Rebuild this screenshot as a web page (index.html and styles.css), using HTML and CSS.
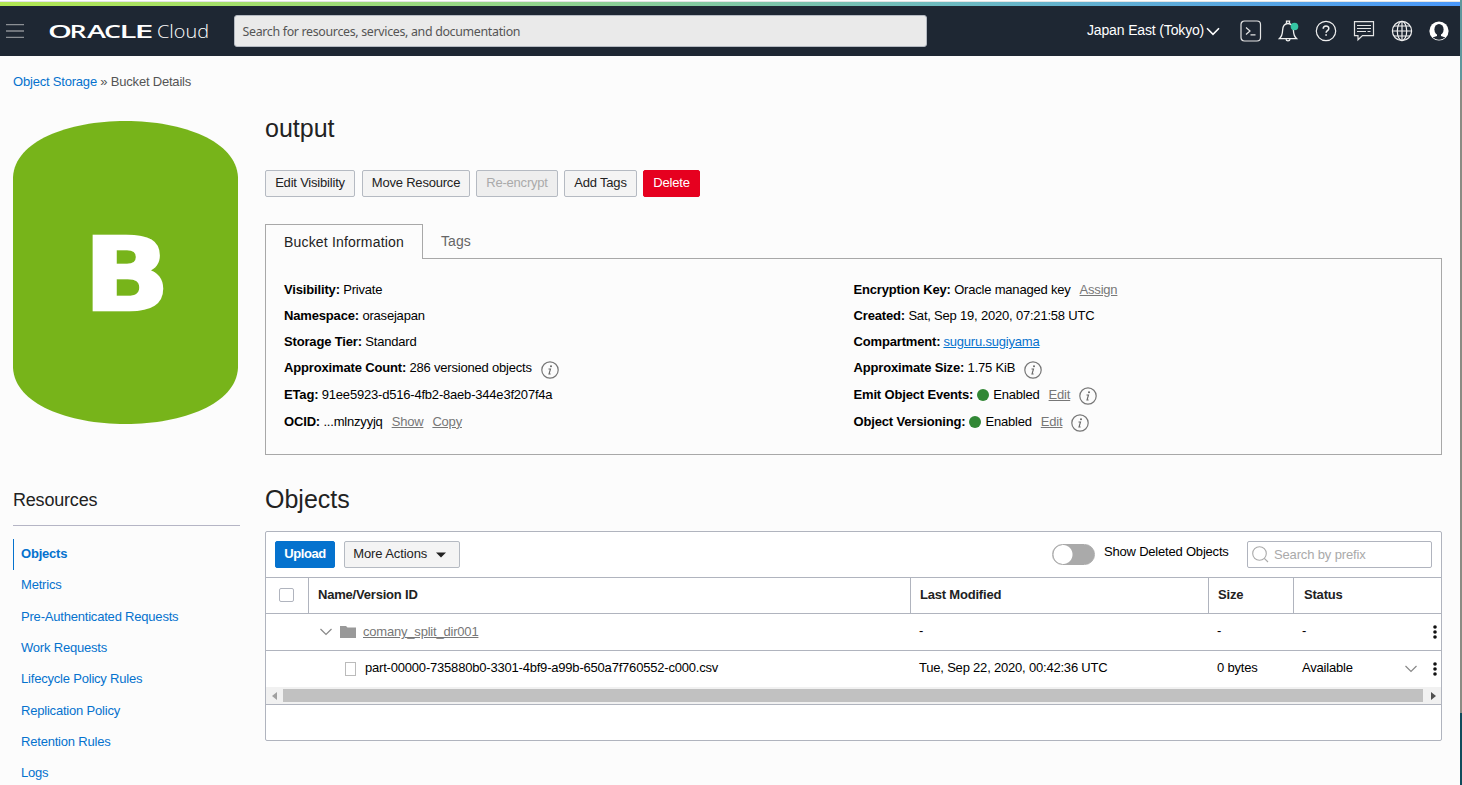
FILE: index.html
```html
<!DOCTYPE html>
<html lang="en">
<head>
<meta charset="utf-8">
<title>Bucket Details</title>
<link rel="stylesheet" href="styles.css">
</head>
<body>
<svg class="defs" width="0" height="0">
  <symbol id="info" viewBox="0 0 18 18"><circle cx="9" cy="9" r="8.2" fill="none" stroke="#777" stroke-width="1.2"/><circle cx="10" cy="5.2" r="1" fill="#666"/><path d="M7.5 8h2l-1.500 5h1.600" fill="none" stroke="#666" stroke-width="1.100"/></symbol>
  <symbol id="dots" viewBox="0 0 4 14"><g fill="#111"><circle cx="2" cy="2" r="1.8"/><circle cx="2" cy="7" r="1.8"/><circle cx="2" cy="12" r="1.8"/></g></symbol>
  <symbol id="chev" viewBox="0 0 12 8"><path d="M.5 1 6 6.5 11.5 1" fill="none" stroke="currentColor" stroke-width="1.200"/></symbol>
</svg>
<div class="screen">
<div class="page">
  <div class="strip"></div>
  <header class="top">
    <svg class="burger" width="18" height="14"><path d="M0 .5h18M0 7h18M0 13.500h18" stroke="#8b8f94" stroke-width="1.300"/></svg>
    <svg class="logo" width="170" height="24"><g class="oracle"><text x="-1" y="19" textLength="24" lengthAdjust="spacingAndGlyphs">O</text><text x="20.500" y="19" textLength="17" lengthAdjust="spacingAndGlyphs">R</text><text x="38" y="19" textLength="19" lengthAdjust="spacingAndGlyphs">A</text><text x="55" y="19" textLength="17" lengthAdjust="spacingAndGlyphs">C</text><text x="70.500" y="19" textLength="17" lengthAdjust="spacingAndGlyphs">L</text><text x="85.500" y="19" textLength="19" lengthAdjust="spacingAndGlyphs">E</text></g><text class="cloud" x="108" y="19" textLength="52" lengthAdjust="spacingAndGlyphs">Cloud</text></svg>
    <div class="search">Search for resources, services, and documentation</div>
    <div class="region"><span>Japan East (Tokyo)</span><svg width="14" height="9"><path d="M1 1.2 7 7.4l6-6.2" fill="none" stroke="#fff" stroke-width="1.6"/></svg></div>
    <nav class="icons">
      <svg width="22" height="22" fill="none" stroke="#e4e4e4" stroke-width="1.2"><rect x="1" y="1" width="19.5" height="20" rx="3.5"/><path d="m6 7.5 4 3.5-4 3.5M10.5 14.8h5"/></svg>
      <svg width="22" height="22" fill="none" stroke="#f0f0f0" stroke-width="1.3"><path d="M1.5 18.6c2.2-2 2.9-4.1 3.1-8.2C4.8 6.2 7 3.5 10 3.5s5.200 2.700 5.400 6.900c.2 4.100.9 6.200 3.100 8.200zM8.500 3V1.200h3V3M8 19.300c.4 2 3.600 2 4 0"/><circle cx="16.500" cy="6.500" r="3.800" fill="#36c5a4" stroke="none"/></svg>
      <svg width="22" height="22" fill="none" stroke="#f0f0f0" stroke-width="1.200"><circle cx="11" cy="11" r="9.700"/><path d="M8.200 8.800c0-3.800 5.700-3.600 5.600-.3 0 2.100-2.700 2.200-2.700 4.300" stroke-width="1.500"/><path d="M10.300 15h1.600" stroke-width="1.700"/></svg>
      <svg width="22" height="22" fill="none" stroke="#e4e4e4" stroke-width="1.200"><path d="M1.500 1.600h19v14H9.500L5 19.800v-4.200H1.500z"/><path d="M4 5.500h14M4 8.500h14M4 11.500h9M14.500 11.500h3"/></svg>
      <svg width="22" height="22" fill="none" stroke="#f0f0f0" stroke-width="1.200"><circle cx="11" cy="11" r="9.600"/><ellipse cx="11" cy="11" rx="4.700" ry="9.600"/><path d="M11 1.400v19.200M1.400 11h19.200M3 6h16M3 16h16"/></svg>
      <svg width="22" height="22"><clipPath id="av"><circle cx="11" cy="11" r="8.700"/></clipPath><circle cx="11" cy="11" r="9.600" fill="#fff"/><g fill="#1e2733"><ellipse cx="11" cy="9.500" rx="4.600" ry="5.500"/><path clip-path="url(#av)" d="M9 13h4v3l4.500 1.600c-3 3.400-10 3.400-13 0L9 16z"/></g></svg>
    </nav>
  </header>
  <div class="crumbs"><a>Object Storage</a> » Bucket Details</div>
  <div class="body">
    <aside>
      <svg class="bucket" width="225" height="303"><path d="M0 56C2 20 55 0 112.500 0S223 20 225 56V247c-2 36-55 56-112.500 56S2 283 0 247z" fill="#77b41a"/><text class="b" x="70.700" y="189" textLength="86" lengthAdjust="spacingAndGlyphs">B</text></svg>
      <h2>Resources</h2>
      <ul>
        <li class="on">Objects</li><li>Metrics</li><li>Pre-Authenticated Requests</li><li>Work Requests</li><li>Lifecycle Policy Rules</li><li>Replication Policy</li><li>Retention Rules</li><li>Logs</li>
      </ul>
    </aside>
    <main>
      <h1>output</h1>
      <div class="actions"><span class="btn w90">Edit Visibility</span><span class="btn w108">Move Resource</span><span class="btn off">Re-encrypt</span><span class="btn w73">Add Tags</span><span class="btn del">Delete</span></div>
      <div class="tabs"><span class="tab cur">Bucket Information</span><span class="tab">Tags</span></div>
      <section class="info">
        <dl>
          <div><b>Visibility:</b> Private</div>
          <div><b>Namespace:</b> orasejapan</div>
          <div><b>Storage Tier:</b> Standard</div>
          <div><b>Approximate Count:</b> 286 versioned objects<svg class="i"><use href="#info"/></svg></div>
          <div><b>ETag:</b> 91ee5923-d516-4fb2-8aeb-344e3f207f4a</div>
          <div><b>OCID:</b> ...mlnzyyjq<u>Show</u><u>Copy</u></div>
        </dl>
        <dl>
          <div><b>Encryption Key:</b> Oracle managed key<u>Assign</u></div>
          <div><b>Created:</b> Sat, Sep 19, 2020, 07:21:58 UTC</div>
          <div><b>Compartment:</b><a class="ul">suguru.sugiyama</a></div>
          <div><b>Approximate Size:</b> 1.75 KiB<svg class="i"><use href="#info"/></svg></div>
          <div><b>Emit Object Events:</b><i class="dot"></i>Enabled<u>Edit</u><svg class="i"><use href="#info"/></svg></div>
          <div><b>Object Versioning:</b><i class="dot"></i>Enabled<u>Edit</u><svg class="i"><use href="#info"/></svg></div>
        </dl>
      </section>
      <h1 class="obj">Objects</h1>
      <section class="panel">
        <div class="bar">
          <span class="btn up">Upload</span>
          <span class="btn more">More Actions <svg width="10" height="6"><path d="M0 .5h10L5 5.500z" fill="#222"/></svg></span>
          <span class="toggle"></span><span class="lbl">Show Deleted Objects</span>
          <span class="find"><svg width="17" height="17" fill="none" stroke="#aaa" stroke-width="1.100"><circle cx="7.500" cy="7.500" r="6.800"/><path d="m12.300 12.300 3.700 3.700"/></svg>Search by prefix</span>
        </div>
        <div class="row head"><span class="c"><i class="check"></i></span><span>Name/Version ID</span><span>Last Modified</span><span>Size</span><span>Status</span></div>
        <div class="row r1"><span></span><span class="name"><svg class="ch" width="12" height="8"><use href="#chev"/></svg><svg class="fold" width="16" height="12"><path d="M0 0h6l1.500 1.500H16V12H0z" fill="#999"/></svg><u>comany_split_dir001</u></span><span>-</span><span>-</span><span class="st">-<svg class="dots" width="4" height="14"><use href="#dots"/></svg></span></div>
        <div class="row r2"><span></span><span class="name file"><i class="doc"></i>part-00000-735880b0-3301-4bf9-a99b-650a7f760552-c000.csv</span><span>Tue, Sep 22, 2020, 00:42:36 UTC</span><span>0 bytes</span><span class="st">Available<svg class="ch2" width="12" height="8"><use href="#chev"/></svg><svg class="dots" width="4" height="14"><use href="#dots"/></svg></span></div>
        <div class="scroll"><svg width="5" height="8"><path d="M5 0v8L0 4z" fill="#a0a0a0"/></svg><i class="thumb"></i><svg width="5" height="8"><path d="M0 0v8l5-4z" fill="#505050"/></svg></div>
      </section>
    </main>
  </div>
</div>
<div class="edge"></div>
</div>
</body>
</html>
```

FILE: styles.css
```css
* { box-sizing: border-box; }
body { margin: 0; font: 13px/16px "Liberation Sans", Arial, sans-serif; letter-spacing: -.2px; color: #000; background: #fcfcfc; overflow: hidden; }
.defs { display: block; height: 0; }
.screen { display: flex; height: 785px; overflow: hidden; }
.page { width: 1460px; flex: none; }
.edge { width: 2px; background: linear-gradient(#5f979c 0 80px, #8a8c84 80px 713px, #0f4c5c 713px); }
.strip { height: 6px; border-top: 1px solid #fff; background: linear-gradient(#e4e4e4 0 1px, transparent 1px), linear-gradient(90deg, #b2e752, #94d68a 35%, #67b5c9 70%, #4a98fa); }
.top { height: 50px; background: #1e2733; display: flex; align-items: center; color: #fff; }
.burger { margin-left: 6px; }
.logo { margin-left: 25px; width: 170px; flex: none; overflow: visible; letter-spacing: 0; }
.oracle { font: 600 18px "Open Sans", sans-serif; fill: #fff; }
.cloud { font: 19px "Open Sans", sans-serif; font-weight: 300; fill: #fff; }
.search { width: 693px; height: 32px; margin-left: 15px; padding: 0 7.500px; border: 1px solid #b5bac2; border-radius: 3px; background: #eaeaea; color: #555; font: 12.4px/31px "Noto Sans", sans-serif; letter-spacing: -.32px; }
.region { display: flex; align-items: center; gap: 2px; margin-left: 160px; font-size: 14px; white-space: nowrap; }
.region span { display: block; width: 117px; margin-top: -2px; letter-spacing: -.15px; }
.icons { display: flex; gap: 15.700px; margin-left: 20px; }
.crumbs { height: 65px; padding: 18px 0 0 13px; color: #555; }
a, li { color: #0572ce; }
.body { display: flex; }
aside { width: 265px; padding-left: 13px; }
.bucket { display: block; letter-spacing: 0; }
.b { font: bold 101px "DejaVu Sans", sans-serif; fill: #fff; stroke: #fff; stroke-width: 2.500px; }
h1, h2 { margin: 0; font-weight: normal; color: #222; }
h2 { width: 227px; height: 102px; padding-top: 65px; border-bottom: 1px solid #b5b5c5; font-size: 18px; line-height: 22px; }
ul { margin: 13px 0 0; padding: 0; list-style: none; }
li { height: 31.350px; padding: 7px 0 0 8px; }
.on { border-left: 1px solid #0572ce; padding-left: 7px; font-weight: bold; }
main { width: 1177px; }
h1 { height: 49px; font-size: 25px; line-height: 14px; letter-spacing: 0; }
.actions { display: flex; gap: 6px; }
.btn { height: 27px; border: 1px solid #b5bac2; border-radius: 2px; background: #f4f4f4; line-height: 24px; text-align: center; white-space: nowrap; color: #222; }
.w90 { width: 90px; margin-right: 1px; }
.w108 { width: 108px; }
.off { width: 82px; background: #eee; color: #aaa; }
.w73 { width: 73px; }
.del { width: 57px; background: #e6001f; border-color: #e6001f; color: #fff; }
.tabs { display: flex; height: 35px; margin-top: 27px; border-bottom: 1px solid #a8a8a8; font-size: 14px; line-height: 34px; color: #666; letter-spacing: .1px; }
.tab { padding: 0 18px; }
.cur { width: 158px; height: 35px; border: 1px solid #a8a8a8; border-bottom: 0; background: #fcfcfc; color: #222; white-space: nowrap; letter-spacing: .18px; }
.info { display: flex; height: 196px; border: 1px solid #a8a8a8; border-top: 0; padding: 18px 18px 0; }
dl { margin: 0; width: 569.500px; }
dl div { display: flex; align-items: center; height: 26px; white-space: pre; }
dl div:nth-child(n+5) { height: 27px; }
dl b { letter-spacing: -.16px; }
u { color: #777; }
dl u { margin-left: 9px; }
.ul { margin-left: 3px; text-decoration: underline; }
.i { width: 18px; height: 18px; margin: 3px 0 0 9px; }
.dot { width: 12px; height: 12px; border-radius: 50%; background: #318735; margin: 0 4px; }
.obj { height: 76px; padding-top: 37px; }
.panel { height: 210px; border: 1px solid #b0b4be; border-radius: 2px; background: #fff; }
.bar { display: flex; height: 46px; padding: 9px 9px 0; border-bottom: 1px solid #b0b4be; }
.up { width: 60px; background: #0572ce; border-color: #0572ce; color: #fff; font-weight: bold; letter-spacing: -.45px; }
.more { width: 116px; margin-left: 9px; padding-right: 5px; letter-spacing: -.1px; }
.more svg { margin-left: 5px; }
.toggle { width: 43px; height: 21px; margin: 3px 0 0 592px; border: 1px solid #aaa; border-radius: 11px; background: radial-gradient(circle at 10px 9.500px, #fff 9px, #aaa 10px); }
.lbl { margin: 3px 0 0 9px; width: 143px; white-space: nowrap; }
.find { display: flex; align-items: center; gap: 5px; width: 185px; height: 27px; padding-left: 4px; border: 1px solid #b0b4be; border-radius: 2px; color: #aaa; letter-spacing: -.15px; }
.row { display: grid; grid-template-columns: 43px 602px 298px 85px 147px; height: 37px; border-bottom: 1px solid #b0b4be; }
.row > span { padding: 9px 0 0 8px; white-space: nowrap; }
.head { height: 36px; font-weight: bold; color: #222; }
.head > span { padding: 9px 0 0 9px; border-right: 1px solid #b0b4be; }
.head > span:last-child { border: 0; padding-left: 10px; }
.head .c { padding: 10px 0 0 13px; }
.check { display: block; width: 15px; height: 14px; border: 1px solid #b0b4be; border-radius: 2px; }
.r2 { height: 36px; border: 0; }
.row > .name { display: flex; padding-left: 11px; }
.r1 > .name { padding-top: 10px; }
.ch { color: #888; margin-top: 4px; }
.fold { margin: 2px 7px 0 8px; }
.row > .file { padding-left: 36px; }
.doc { width: 11px; height: 14px; margin: 2px 9px 0 0; border: 1px solid #bbb; }
.st { display: flex; }
.dots { margin: 2px 4px 0 auto; }
.ch2 { color: #888; margin: 5px 0 0 52px; }
.scroll { display: flex; align-items: center; justify-content: space-between; height: 18px; padding: 0 5px 0 6px; background: #f1f1f1; border-bottom: 1px solid #b0b4be; }
.thumb { width: 1140px; height: 13px; margin-right: 3px; background: #c1c1c1; }
```
